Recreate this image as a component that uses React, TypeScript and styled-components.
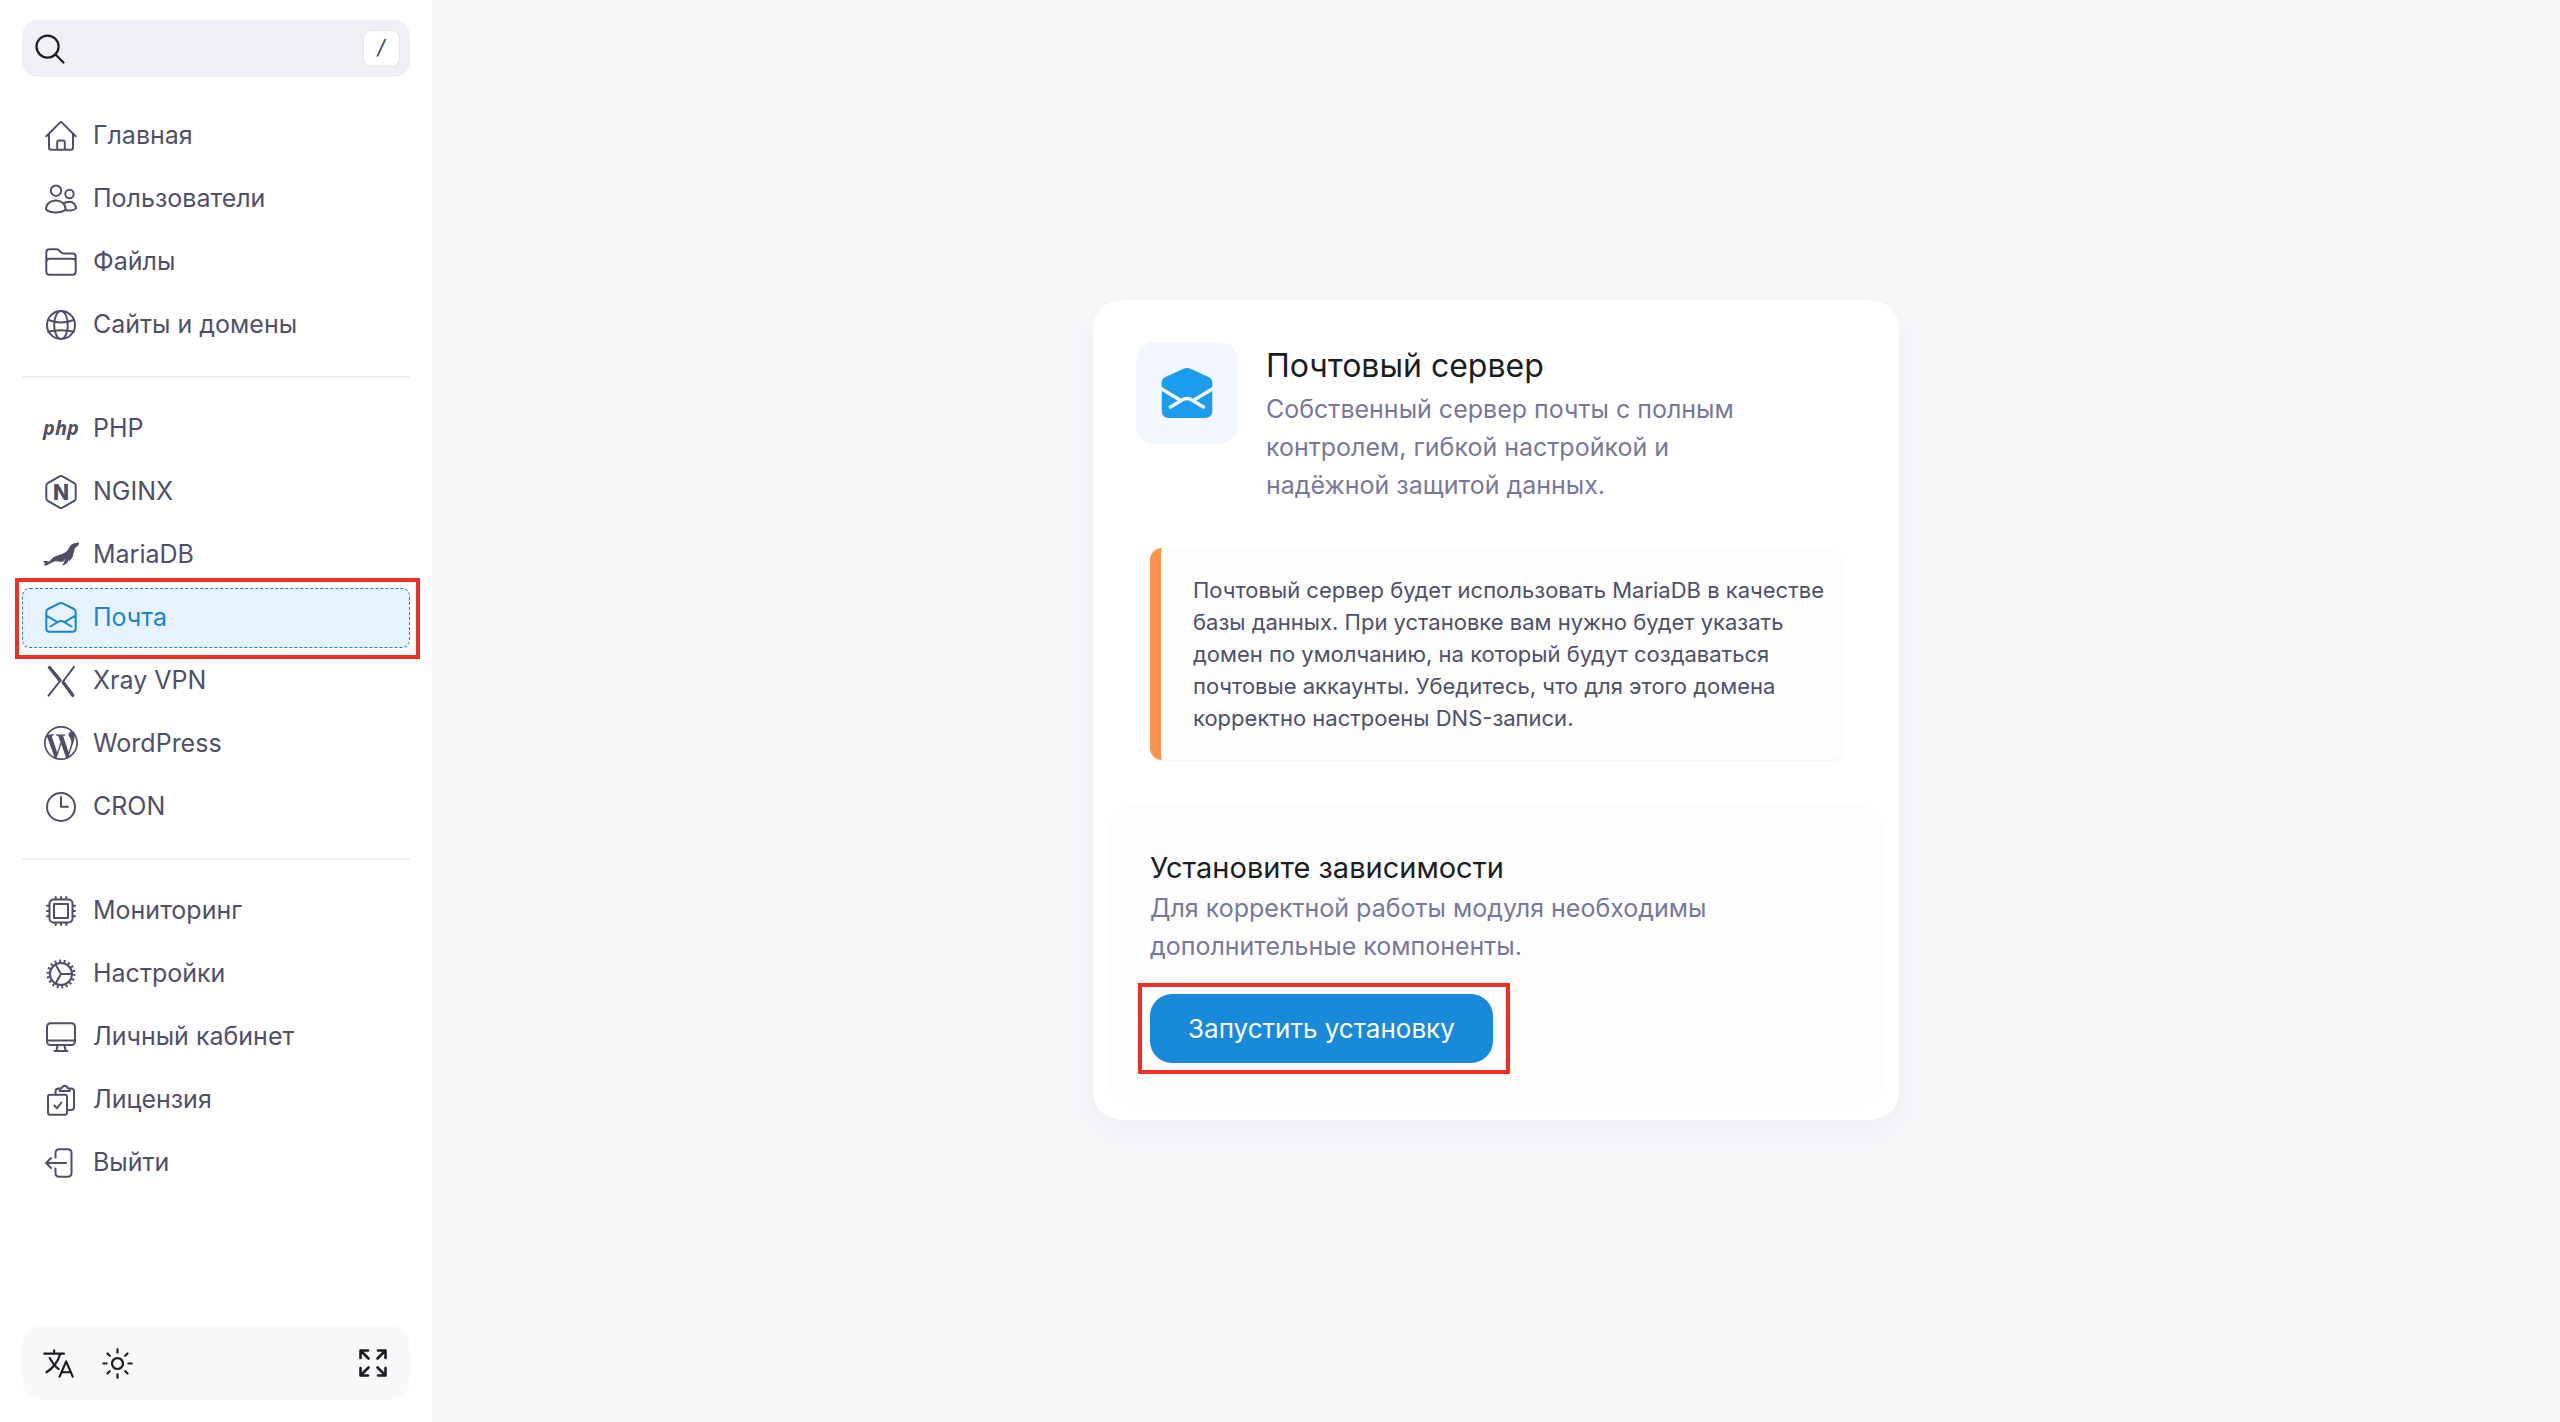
import React from "react";
import styled, { createGlobalStyle } from "styled-components";
import { IoLanguageOutline, IoSearchOutline, IoSunnyOutline } from "react-icons/io5";
import { SiMariadb, SiWordpress } from "react-icons/si";

const color = {
  page: "#f8f8fb",
  surface: "#ffffff",
  soft: "#fdfdfd",
  ink: "#1c1d22",
  text: "#4f5068",
  muted: "#787899",
  line: "#f1f1f4",
  accent: "#1b84cc",
  button: "#188ad9",
  bright: "#1b9cee",
  warning: "#f9934a",
  mark: "#f03024",
};

const GlobalStyle = createGlobalStyle`
  *, *::before, *::after { box-sizing: border-box; }
  body {
    margin: 0;
    background: ${color.page};
    color: ${color.text};
    font-family: Inter, "Noto Sans", sans-serif;
    font-size: 25px;
    line-height: 38px;
  }
  button, input { font: inherit; }
`;

const Layout = styled.div`
  display: flex;
  min-height: 100vh;
`;

const Sidebar = styled.aside`
  display: flex;
  flex-direction: column;
  flex: none;
  width: 432px;
  gap: 29px;
  padding: 20px 22px 22px;
  background: ${color.surface};
`;

const SearchBox = styled.label`
  display: flex;
  align-items: center;
  height: 57px;
  padding: 0 11px 0 10px;
  border-radius: 16px;
  background: #eef0f6;
  color: ${color.ink};
`;

const SearchInput = styled.input`
  flex: 1;
  min-width: 0;
  border: 0;
  outline: 0;
  background: transparent;
  color: inherit;
`;

const Key = styled.kbd`
  flex: none;
  width: 35px;
  height: 35px;
  border-radius: 7px;
  background: ${color.surface};
  box-shadow: 0 0 1px 1px #e2e4ea;
  color: ${color.text};
  font-family: "DejaVu Sans Mono", monospace;
  font-size: 21px;
  line-height: 35px;
  text-align: center;
`;

const Nav = styled.nav`
  flex: 1;
`;

const Group = styled.ul`
  display: flex;
  flex-direction: column;
  gap: 3px;
  margin: 0;
  padding: 0;
  list-style: none;

  & + & {
    margin-top: 21px;
    padding-top: 21px;
    border-top: 2px solid ${color.line};
  }
`;

const NavLink = styled.a<{ $active?: boolean }>`
  position: relative;
  display: flex;
  align-items: center;
  gap: 14px;
  height: 60px;
  padding: 0 20px 2px;
  border: 1px dashed ${(p) => (p.$active ? color.accent : "transparent")};
  border-radius: 8px;
  background: ${(p) => (p.$active ? "#e6f3fe" : "transparent")};
  color: ${(p) => (p.$active ? color.accent : color.text)};
  text-decoration: none;
`;

const IconSlot = styled.span`
  display: grid;
  place-items: center;
  flex: none;
  width: 36px;
  height: 36px;
`;

const Marker = styled.span<{ $inset: string }>`
  position: absolute;
  z-index: 1;
  inset: ${(p) => p.$inset};
  border: 4px solid ${color.mark};
  pointer-events: none;
`;

const Footer = styled.footer`
  display: flex;
  align-items: center;
  gap: 23px;
  height: 74px;
  padding: 0 19px 0 18px;
  border-radius: 20px;
  background: ${color.page};
`;

const IconButton = styled.button<{ $end?: boolean }>`
  display: grid;
  place-items: center;
  width: 36px;
  height: 36px;
  margin-left: ${(p) => (p.$end ? "auto" : "0")};
  padding: 0;
  border: 0;
  background: transparent;
  color: ${color.ink};
`;

const Main = styled.main`
  display: flex;
  flex: 1;
  align-items: center;
  justify-content: center;
  padding: 22px 22px 24px;
`;

const Card = styled.article`
  width: 100%;
  max-width: 806px;
  padding: 42px 16px 15px;
  border-radius: 28px;
  background: ${color.surface};
  box-shadow: 0 12px 32px rgba(60, 60, 110, 0.06);
`;

const CardHeader = styled.header`
  display: flex;
  align-items: flex-start;
  gap: 28px;
  padding: 0 100px 0 27px;
`;

const Tile = styled.div`
  display: grid;
  place-items: center;
  flex: none;
  width: 102px;
  height: 102px;
  border-radius: 18px;
  background: #f3f8fe;
`;

const HeaderText = styled.div`
  padding-top: 2px;
`;

const Title = styled.h1`
  margin: 0 0 2px;
  color: ${color.ink};
  font-size: 32px;
  font-weight: 400;
  line-height: 44px;
`;

const Subtitle = styled.h2`
  margin: 0 0 2px;
  color: ${color.ink};
  font-size: 29px;
  font-weight: 400;
  line-height: 38px;
`;

const Description = styled.p`
  margin: 0;
  color: ${color.muted};
`;

const Notice = styled.p`
  margin: 44px 41px;
  padding: 26px 8px 26px 32px;
  border-left: 11px solid ${color.warning};
  border-radius: 12px;
  background: ${color.soft};
  box-shadow: 0 2px 2px rgba(30, 30, 60, 0.04);
  font-size: 22px;
  line-height: 32px;
`;

const Section = styled.section`
  padding: 45px 41px 42px;
  border-radius: 20px;
  background: ${color.soft};
`;

const PrimaryButton = styled.button`
  position: relative;
  height: 69px;
  margin-top: 29px;
  padding: 0 38px;
  border: 0;
  border-radius: 22px;
  background: ${color.button};
  color: #fff;
  font-size: 26px;
`;

const Stroke = ({ children }: { children: React.ReactNode }) => (
  <svg
    width="36"
    height="36"
    viewBox="0 0 36 36"
    fill="none"
    stroke="currentColor"
    strokeWidth="2"
    strokeLinecap="round"
    strokeLinejoin="round"
    aria-hidden="true"
  >
    {children}
  </svg>
);

const HomeIcon = () => (
  <Stroke>
    <path d="M3.3 19.2 17 5.6q1-.9 2 0l13.7 13.6M6 17v13.7q0 2 2 2h20q2 0 2-2V17M14.2 32.5V25.600q0-2 2-2h3.600q2 0 2 2v6.900" />
  </Stroke>
);

const UsersIcon = () => (
  <Stroke>
    <circle cx="13" cy="10.700" r="5.200" />
    <circle cx="26.500" cy="14" r="4.200" />
    <path d="M3 29.500C3 23.500 7.500 20.400 12.800 20.400s9.800 3.100 9.800 9.100c-4.600 4-15 4-19.600 0ZM20.500 23.700c1.500-1.500 3.800-1.900 6-1.900 4 0 6.500 3.200 6.500 6.700-3 2-7 2.500-10.500 1.500" />
  </Stroke>
);

const FolderIcon = () => (
  <Stroke>
    <path d="M3.300 9.500q0-3.200 3.200-3.200h7q1.500 0 2.500.9l2.500 2.500q1 .9 2.500.9h8.500q3.200 0 3.200 3.200v14.700q0 3.200-3.200 3.200h-23q-3.200 0-3.200-3.200ZM3.300 19q0-3.300 3.200-3.300h23q3.200 0 3.200 3.300" />
  </Stroke>
);

const GlobeIcon = () => (
  <Stroke>
    <circle cx="18" cy="19" r="14" />
    <ellipse cx="18" cy="19" rx="6.800" ry="14" />
    <path d="M5.500 14q12.500 5 25 0M5.300 26q4-1.800 12.700-1.800t12.700 1.800" />
  </Stroke>
);

const PhpMark = styled.span`
  font-family: "Open Sans", sans-serif;
  font-size: 20px;
  font-style: italic;
  font-weight: 700;
  line-height: 32px;
`;

const NginxIcon = () => (
  <svg width="36" height="36" viewBox="0 0 36 36" aria-hidden="true">
    <path
      d="M16.500 3.400q1.500-.8 3 0l11.700 6.700q1.500.9 1.500 2.600v12.600q0 1.700-1.500 2.600l-11.700 6.700q-1.500.8-3 0L4.800 27.900q-1.500-.9-1.500-2.600V12.700q0-1.700 1.500-2.600Z"
      fill="none"
      stroke="currentColor"
      strokeWidth="2"
    />
    <text x="18" y="26.500" textAnchor="middle" fontSize="21" fontWeight="800" fill="currentColor">
      N
    </text>
  </svg>
);

const MailIcon = () => (
  <Stroke>
    <path d="M3.300 13q0-2 1.700-3L16.300 4.300q1.700-.8 3.400 0L31 10q1.700 1 1.700 3v16.500q0 3.200-3.200 3.200h-23q-3.200 0-3.200-3.200ZM3.500 16.500l10 6.200M32.500 16.500l-10 6.200M7.500 27.500l8-4.800q2.500-1.400 5 0l8 4.800" />
  </Stroke>
);

const MailSolidIcon = () => (
  <svg width="52" height="52" viewBox="0 0 52 52" aria-hidden="true">
    <path
      d="M.7 16q0-4 3.300-5.800L22.500 1.800q3.500-1.600 7 0L48 10.200q3.300 1.800 3.300 5.800v27.500q0 7.500-7.500 7.500H8.200q-7.500 0-7.500-7.500Z"
      fill={color.bright}
    />
    <path
      d="M0 21.500l19 11.500M52 21.500l-19 11.500M9.500 40l12.500-7.500q4-2.200 8 0L42.500 40"
      fill="none"
      stroke="#f3f8fe"
      strokeWidth="3.500"
      strokeLinecap="round"
    />
  </svg>
);

const XrayIcon = () => (
  <Stroke>
    <path d="M6.500 5.500 16.800 18.200M20.300 20.500 29.700 33.300" strokeWidth="3.500" />
    <path d="M17.500 18.500 5.500 33.700M31 4.800 20 19.500" />
  </Stroke>
);

const ClockIcon = () => (
  <Stroke>
    <circle cx="18" cy="19" r="14" />
    <path d="M18 9v9.700h7" />
  </Stroke>
);

const ChipIcon = () => (
  <Stroke>
    <rect x="6.500" y="7.500" width="23" height="23" rx="4" />
    <rect x="11" y="12" width="14" height="14" />
    <path d="M12.700 7V5M18 7V5M23.300 7V5M12.700 31v2M18 31v2M23.300 31v2M6 13.700H4M6 19H4M6 24.300H4M30 13.700h2M30 19h2M30 24.300h2" />
  </Stroke>
);

const GearIcon = () => (
  <Stroke>
    <circle cx="18" cy="19" r="11" />
    <circle cx="18" cy="19" r="13" strokeWidth="3" strokeDasharray="1.900 2.638" strokeLinecap="butt" />
    <path d="M18 19h11M18 19l-5.500-9.500M18 19l-5.500 9.500" />
  </Stroke>
);

const MonitorIcon = () => (
  <Stroke>
    <rect x="4" y="5.300" width="28" height="21.700" rx="3.500" />
    <path d="M4.300 22.500h27.400M14.500 27.500l-1 5M21.500 27.500l1 5M11.500 33h13" />
  </Stroke>
);

const LicenseIcon = () => (
  <Stroke>
    <rect x="5" y="13.800" width="19" height="20" rx="2" />
    <path d="M11.300 24.500l2.700 2.700 4.500-5.700M12.500 13.500V10.500q0-3 3-3h1.500M26.500 7.500h1.500q3 0 3 3v15.500q0 3-3 3h-3.500" />
    <path d="M16.500 9.900q0-2.400 2.300-2.800Q19.500 4.800 21.700 4.800t2.900 2.300q2.300.4 2.300 2.800Z" />
  </Stroke>
);

const ExitIcon = () => (
  <Stroke>
    <path d="M12.500 13.500V9q0-3.700 3.700-3.700h8.600q3.700 0 3.700 3.700v20q0 3.700-3.700 3.700h-8.600q-3.700 0-3.700-3.700v-4.500M23 19H3.500M8 14l-4.800 5L8 24" />
  </Stroke>
);

const ExpandIcon = () => (
  <svg
    width="36"
    height="36"
    viewBox="0 0 36 36"
    fill="none"
    stroke="currentColor"
    strokeWidth="2.600"
    strokeLinecap="round"
    strokeLinejoin="round"
    aria-hidden="true"
  >
    <path d="M5.500 13V5.500H13M5.500 5.500l8 8M23 5.500h7.500V13M30.500 5.500l-8 8M5.500 23v7.500H13M5.500 30.500l8-8M23 30.500h7.500V23M30.500 30.500l-8-8" />
  </svg>
);

type Item = { label: string; icon: React.ReactNode; active?: boolean };

const groups: Item[][] = [
  [
    { label: "Главная", icon: <HomeIcon /> },
    { label: "Пользователи", icon: <UsersIcon /> },
    { label: "Файлы", icon: <FolderIcon /> },
    { label: "Сайты и домены", icon: <GlobeIcon /> },
  ],
  [
    { label: "PHP", icon: <PhpMark aria-hidden="true">php</PhpMark> },
    { label: "NGINX", icon: <NginxIcon /> },
    { label: "MariaDB", icon: <SiMariadb size={36} aria-hidden="true" /> },
    { label: "Почта", icon: <MailIcon />, active: true },
    { label: "Xray VPN", icon: <XrayIcon /> },
    { label: "WordPress", icon: <SiWordpress size={34} aria-hidden="true" /> },
    { label: "CRON", icon: <ClockIcon /> },
  ],
  [
    { label: "Мониторинг", icon: <ChipIcon /> },
    { label: "Настройки", icon: <GearIcon /> },
    { label: "Личный кабинет", icon: <MonitorIcon /> },
    { label: "Лицензия", icon: <LicenseIcon /> },
    { label: "Выйти", icon: <ExitIcon /> },
  ],
];

export default function App() {
  return (
    <>
      <GlobalStyle />
      <Layout>
        <Sidebar>
          <SearchBox htmlFor="search">
            <IoSearchOutline size={36} aria-hidden="true" />
            <SearchInput id="search" type="text" aria-label="Поиск" />
            <Key>/</Key>
          </SearchBox>
          <Nav>
            {groups.map((items, index) => (
              <Group key={index}>
                {items.map((item) => (
                  <li key={item.label}>
                    <NavLink href="#" $active={item.active} aria-current={item.active ? "page" : undefined}>
                      <IconSlot>{item.icon}</IconSlot>
                      {item.label}
                      {item.active && <Marker $inset="-11px -11px -12px -8px" />}
                    </NavLink>
                  </li>
                ))}
              </Group>
            ))}
          </Nav>
          <Footer>
            <IconButton type="button" aria-label="Язык">
              <IoLanguageOutline size={35} />
            </IconButton>
            <IconButton type="button" aria-label="Тема">
              <IoSunnyOutline size={35} />
            </IconButton>
            <IconButton type="button" aria-label="Во весь экран" $end>
              <ExpandIcon />
            </IconButton>
          </Footer>
        </Sidebar>
        <Main>
          <Card>
            <CardHeader>
              <Tile>
                <MailSolidIcon />
              </Tile>
              <HeaderText>
                <Title>Почтовый сервер</Title>
                <Description>
                  Собственный сервер почты с полным контролем, гибкой настройкой и надёжной защитой данных.
                </Description>
              </HeaderText>
            </CardHeader>
            <Notice>
              Почтовый сервер будет использовать MariaDB в качестве базы данных. При установке вам нужно будет
              указать домен по умолчанию, на который будут создаваться почтовые аккаунты. Убедитесь, что для
              этого домена корректно настроены DNS-записи.
            </Notice>
            <Section>
              <Subtitle>Установите зависимости</Subtitle>
              <Description>Для корректной работы модуля необходимы дополнительные компоненты.</Description>
              <PrimaryButton type="button">
                Запустить установку
                <Marker $inset="-11px -17px -11px -12px" />
              </PrimaryButton>
            </Section>
          </Card>
        </Main>
      </Layout>
    </>
  );
}
